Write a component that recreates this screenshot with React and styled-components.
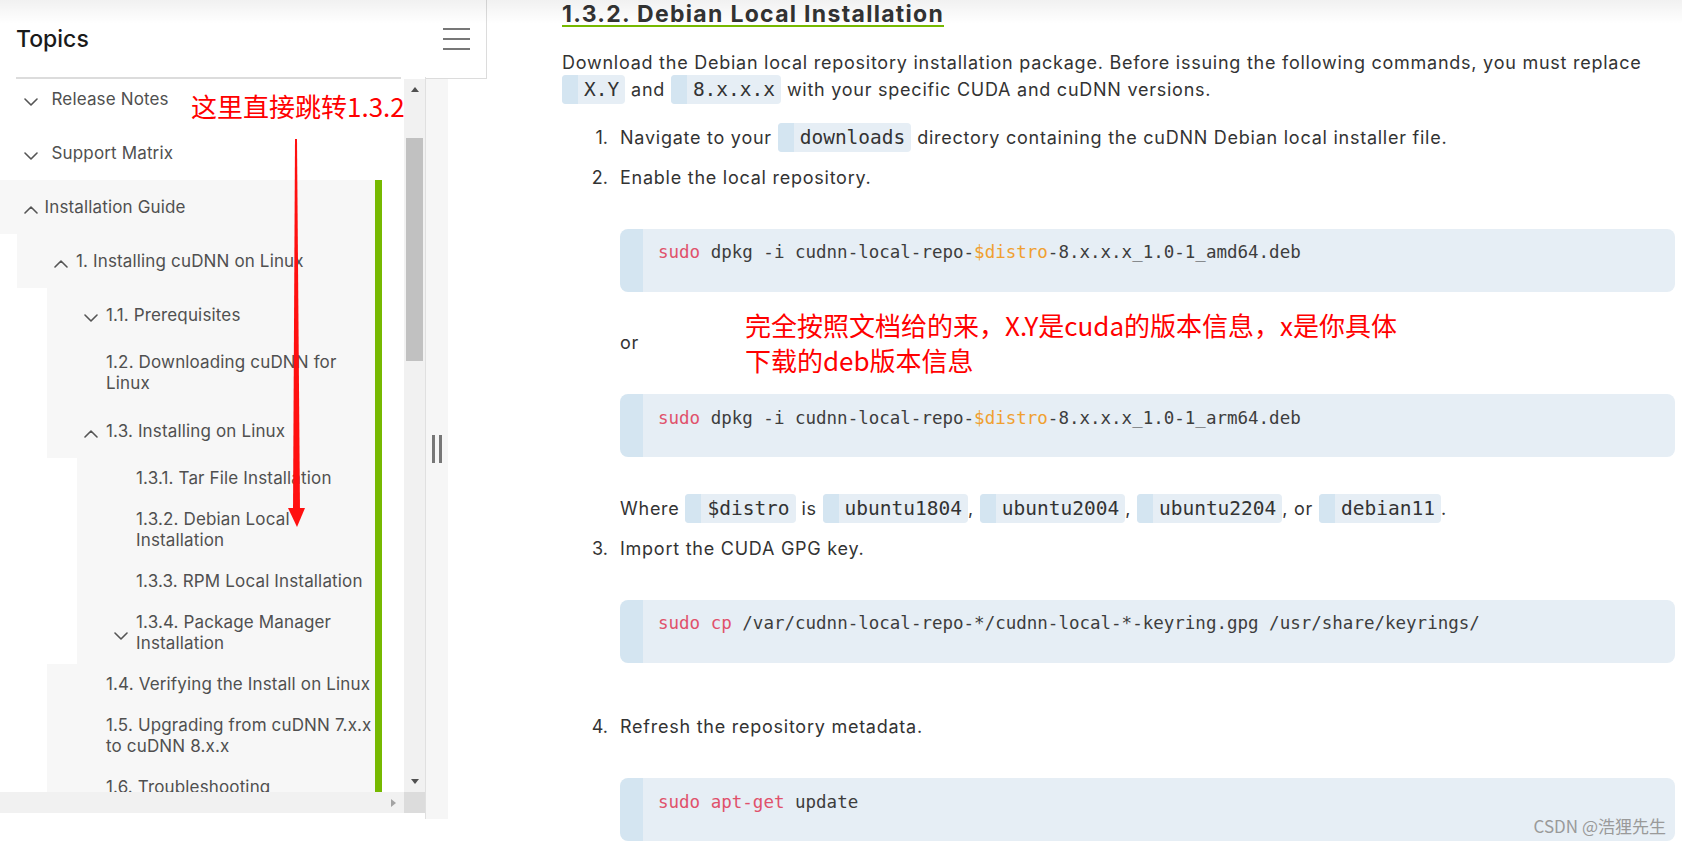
import React from 'react';
import styled, { createGlobalStyle } from 'styled-components';

const GlobalStyle = createGlobalStyle`
  html, body { margin: 0; padding: 0; background: #fff; }
  body { font-family: Inter, "Noto Sans", sans-serif; overflow: hidden; }
  * { box-sizing: border-box; }
`;

const Page = styled.div`
  position: relative;
  display: flex;
  align-items: flex-start;
  width: 1682px;
  height: 844px;
  overflow: hidden;
  background: #fff;
`;

const TopShade = styled.div`
  position: absolute;
  left: 0;
  right: 0;
  top: 0;
  height: 24px;
  background: linear-gradient(to bottom, rgba(0, 0, 0, 0.055), rgba(0, 0, 0, 0));
  pointer-events: none;
  z-index: 5;
`;

/* ---------- Sidebar ---------- */
const Sidebar = styled.aside`
  width: 487px;
  flex-shrink: 0;
  display: flex;
  flex-direction: column;
`;

const SidebarHeader = styled.div`
  height: 79px;
  border-right: 1px solid #dcdcdc;
  border-bottom: 1px solid #dcdcdc;
  display: flex;
  align-items: center;
  justify-content: space-between;
  padding: 0 16px 0 16px;
`;

const SidebarTitle = styled.h3`
  margin: 0;
  font-family: Inter, sans-serif;
  font-size: 23px;
  font-weight: 500;
  color: #1a1a1a;
  line-height: 28px;
`;

const MenuButton = styled.button`
  display: flex;
  flex-direction: column;
  gap: 8px;
  padding: 0;
  border: 0;
  background: none;
  width: 27px;
`;

const MenuBar = styled.span`
  display: block;
  width: 27px;
  height: 2px;
  background: #777;
`;

const SidebarBody = styled.div`
  display: flex;
  margin-top: -2px;
`;

const Pane = styled.div`
  width: 426px;
  display: flex;
  flex-direction: column;
  background: #fff;
  border-right: 1px solid #e0e0e0;
`;

const TopRule = styled.div`
  height: 2px;
  width: 385px;
  margin-left: 16px;
  background: #dcdcdc;
`;

const PaneRow = styled.div`
  display: flex;
  height: 713px;
`;

const Viewport = styled.nav`
  width: 404px;
  height: 713px;
  overflow: hidden;
`;

const VScroll = styled.div`
  width: 21px;
  background: #f1f1f1;
  display: flex;
  flex-direction: column;
  align-items: center;
`;

const ScrollBtn = styled.div`
  width: 21px;
  height: 21px;
  display: flex;
  align-items: center;
  justify-content: center;
`;

const TriUp = styled.span`
  width: 0;
  height: 0;
  border-left: 4.5px solid transparent;
  border-right: 4.5px solid transparent;
  border-bottom: 5px solid #505050;
`;

const TriDown = styled.span`
  width: 0;
  height: 0;
  border-left: 4.5px solid transparent;
  border-right: 4.5px solid transparent;
  border-top: 5px solid #505050;
`;

const TriRight = styled.span`
  width: 0;
  height: 0;
  border-top: 4.5px solid transparent;
  border-bottom: 4.5px solid transparent;
  border-left: 5px solid #a3a3a3;
`;

const Thumb = styled.div`
  width: 17px;
  height: 223px;
  margin-top: 38px;
  background: #c1c1c1;
`;

const Spacer = styled.div`
  flex: 1;
`;

const HScrollRow = styled.div`
  display: flex;
  height: 21px;
`;

const HScroll = styled.div`
  width: 404px;
  background: #f1f1f1;
  display: flex;
  align-items: center;
  justify-content: flex-end;
  padding-right: 8px;
`;

const Corner = styled.div`
  width: 21px;
  background: #dcdcdc;
`;

const Resizer = styled.div`
  width: 22px;
  height: 740px;
  margin-top: 2px;
  background: #f6f6f6;
  display: flex;
  align-items: center;
  justify-content: center;
  gap: 4px;
`;

const Grip = styled.span`
  width: 3px;
  height: 28px;
  background: #777;
`;

const NavList = styled.ul`
  list-style: none;
  margin: ${(p) => p.$top || 0}px 0 0 ${(p) => p.$indent || 0}px;
  padding: 0;
`;

const NavItem = styled.li`
  margin-right: ${(p) => (p.$active ? 22 : 0)}px;
  border-right: ${(p) => (p.$active ? '7px solid #76b900' : 'none')};
`;

const Row = styled.div`
  display: flex;
  align-items: center;
  min-height: ${(p) => (p.$toggle ? 54 : 0)}px;
  padding: 10px 6px 10px ${(p) => p.$pl}px;
  background: ${(p) => (p.$shade ? '#f7f7f7' : 'transparent')};
`;

const ToggleSlot = styled.span`
  width: ${(p) => p.$w}px;
  flex-shrink: 0;
  display: flex;
  align-items: center;
  padding-top: 5px;
`;

const Label = styled.span`
  font-family: Inter, sans-serif;
  font-size: 17px;
  line-height: 21px;
  letter-spacing: 0.15px;
  color: #505050;
  white-space: nowrap;
`;

const Chevron = ({ up }) => (
  <svg width="14" height="8" viewBox="0 0 14 8" fill="none">
    <polyline
      points={up ? '1,7 7,1 13,7' : '1,1 7,7 13,1'}
      stroke="#555"
      strokeWidth="1.6"
      strokeLinecap="round"
      strokeLinejoin="round"
    />
  </svg>
);

const NavRow = ({ pl = 37, slot = 22, toggle, up, shade, children }) => (
  <Row $pl={pl} $toggle={toggle} $shade={shade}>
    <ToggleSlot $w={slot}>{toggle && <Chevron up={up} />}</ToggleSlot>
    <Label>{children}</Label>
  </Row>
);

/* ---------- Main ---------- */
const Main = styled.main`
  margin-left: 75px;
  width: 1113px;
  flex-shrink: 0;
  font-family: Inter, sans-serif;
  font-size: 18px;
  line-height: 27px;
  letter-spacing: 0.75px;
  color: #333;
`;

const Title = styled.h2`
  margin: 0;
  width: fit-content;
  padding-top: 4px;
  font-size: 23px;
  font-weight: 700;
  line-height: 21px;
  letter-spacing: 1.3px;
  color: #333;
  border-bottom: 2px solid #76b900;
`;

const Para = styled.p`
  margin: 22px 0 0;
`;

const Code = styled.code`
  font-family: "DejaVu Sans Mono", monospace;
  font-size: 19.5px;
  line-height: 1;
  letter-spacing: 0;
  color: #333;
  background: #e6eef5;
  border-left: 16px solid #d4e5f1;
  border-radius: 4px;
  padding: 3px 6px;
`;

const Steps = styled.ol`
  list-style: none;
  margin: 20.5px 0 0;
  padding: 0;
`;

const Step = styled.li`
  display: grid;
  grid-template-columns: 58px 1fr;
  margin-bottom: 13px;
`;

const StepNum = styled.span`
  text-align: right;
  padding-right: 12px;
  letter-spacing: 0;
`;

const StepBody = styled.div`
  min-width: 0;
`;

const Line = styled.div``;

const Pre = styled.pre`
  margin: 38px 0 37.5px;
  padding: 11.5px 16px 27.5px 15px;
  border-left: 23px solid #d4e5f1;
  border-radius: 8px;
  background: #e6eef5;
  font-family: "DejaVu Sans Mono", monospace;
  font-size: 17.5px;
  line-height: 24px;
  letter-spacing: 0;
  color: #3d3d3d;
  white-space: pre;
  overflow: hidden;
`;

const Cmd = styled.span`
  color: #e0516b;
`;

const Var = styled.span`
  color: #f0a030;
`;

/* ---------- Overlays ---------- */
const Note = styled.div`
  position: absolute;
  left: ${(p) => p.$x}px;
  top: ${(p) => p.$y}px;
  font-family: "Noto Sans CJK SC", sans-serif;
  font-size: 26px;
  line-height: ${(p) => p.$lh}px;
  color: #ff0000;
  white-space: nowrap;
  z-index: 6;
`;

const ArrowSvg = styled.svg`
  position: absolute;
  left: 0;
  top: 0;
  z-index: 6;
  pointer-events: none;
`;

const Watermark = styled.div`
  position: absolute;
  right: 16px;
  bottom: 8px;
  font-family: "Noto Sans CJK SC", sans-serif;
  font-size: 17px;
  line-height: 20px;
  color: #9a9a9a;
  z-index: 6;
`;

export default function App() {
  return (
    <>
      <GlobalStyle />
      <Page>
        <TopShade />
        <Sidebar>
          <SidebarHeader>
            <SidebarTitle>Topics</SidebarTitle>
            <MenuButton aria-label="menu">
              <MenuBar />
              <MenuBar />
              <MenuBar />
            </MenuButton>
          </SidebarHeader>
          <SidebarBody>
            <Pane>
              <TopRule />
              <PaneRow>
                <Viewport>
                  <NavList $top={-7}>
                    <NavItem>
                      <NavRow pl={24} slot={27.5} toggle>Release Notes</NavRow>
                    </NavItem>
                    <NavItem>
                      <NavRow pl={24} slot={27.5} toggle>Support Matrix</NavRow>
                    </NavItem>
                    <NavItem $active>
                      <NavRow pl={24} slot={20.5} toggle up shade>Installation Guide</NavRow>
                      <NavList $indent={17}>
                        <NavItem>
                          <NavRow toggle up shade>1. Installing cuDNN on Linux</NavRow>
                          <NavList $indent={30}>
                            <NavItem>
                              <NavRow toggle shade>1.1. Prerequisites</NavRow>
                            </NavItem>
                            <NavItem>
                              <NavRow shade>1.2. Downloading cuDNN for<br />Linux</NavRow>
                            </NavItem>
                            <NavItem>
                              <NavRow toggle up shade>1.3. Installing on Linux</NavRow>
                              <NavList $indent={30}>
                                <NavItem>
                                  <NavRow shade>1.3.1. Tar File Installation</NavRow>
                                </NavItem>
                                <NavItem>
                                  <NavRow shade>1.3.2. Debian Local<br />Installation</NavRow>
                                </NavItem>
                                <NavItem>
                                  <NavRow shade>1.3.3. RPM Local Installation</NavRow>
                                </NavItem>
                                <NavItem>
                                  <NavRow toggle shade>1.3.4. Package Manager<br />Installation</NavRow>
                                </NavItem>
                              </NavList>
                            </NavItem>
                            <NavItem>
                              <NavRow shade>1.4. Verifying the Install on Linux</NavRow>
                            </NavItem>
                            <NavItem>
                              <NavRow shade>1.5. Upgrading from cuDNN 7.x.x<br />to cuDNN 8.x.x</NavRow>
                            </NavItem>
                            <NavItem>
                              <NavRow shade>1.6. Troubleshooting</NavRow>
                            </NavItem>
                          </NavList>
                        </NavItem>
                      </NavList>
                    </NavItem>
                  </NavList>
                </Viewport>
                <VScroll>
                  <ScrollBtn><TriUp /></ScrollBtn>
                  <Thumb />
                  <Spacer />
                  <ScrollBtn><TriDown /></ScrollBtn>
                </VScroll>
              </PaneRow>
              <HScrollRow>
                <HScroll><TriRight /></HScroll>
                <Corner />
              </HScrollRow>
            </Pane>
            <Resizer>
              <Grip />
              <Grip />
            </Resizer>
          </SidebarBody>
        </Sidebar>

        <Main>
          <Title>1.3.2. Debian Local Installation</Title>
          <Para>
            Download the Debian local repository installation package. Before issuing the following commands, you must replace
            <br />
            <Code>X.Y</Code> and <Code>8.x.x.x</Code> with your specific CUDA and cuDNN versions.
          </Para>
          <Steps>
            <Step>
              <StepNum>1.</StepNum>
              <StepBody>
                <Line>
                  Navigate to your <Code>downloads</Code> directory containing the cuDNN Debian local installer file.
                </Line>
              </StepBody>
            </Step>
            <Step>
              <StepNum>2.</StepNum>
              <StepBody>
                <Line>Enable the local repository.</Line>
                <Pre>
                  <Cmd>sudo</Cmd> dpkg -i cudnn-local-repo-<Var>$distro</Var>-8.x.x.x_1.0-1_amd64.deb
                </Pre>
                <Line>or</Line>
                <Pre>
                  <Cmd>sudo</Cmd> dpkg -i cudnn-local-repo-<Var>$distro</Var>-8.x.x.x_1.0-1_arm64.deb
                </Pre>
                <Line>
                  Where <Code>$distro</Code> is <Code>ubuntu1804</Code>, <Code>ubuntu2004</Code>,{' '}
                  <Code>ubuntu2204</Code>, or <Code>debian11</Code>.
                </Line>
              </StepBody>
            </Step>
            <Step>
              <StepNum>3.</StepNum>
              <StepBody>
                <Line>Import the CUDA GPG key.</Line>
                <Pre>
                  <Cmd>sudo</Cmd> <Cmd>cp</Cmd> /var/cudnn-local-repo-*/cudnn-local-*-keyring.gpg /usr/share/keyrings/
                </Pre>
              </StepBody>
            </Step>
            <Step>
              <StepNum>4.</StepNum>
              <StepBody>
                <Line>Refresh the repository metadata.</Line>
                <Pre>
                  <Cmd>sudo</Cmd> <Cmd>apt-get</Cmd> update
                </Pre>
              </StepBody>
            </Step>
          </Steps>
        </Main>

        <Note $x={191} $y={93} $lh={26}>这里直接跳转1.3.2</Note>
        <ArrowSvg width="330" height="540" viewBox="0 0 330 540">
          <polygon points="295,139 297,139 300,511 293,511" fill="#ff1010" />
          <polygon points="288,508 305,508 297,527" fill="#ff1010" />
        </ArrowSvg>
        <Note $x={745} $y={307} $lh={35}>
          完全按照文档给的来，X.Y是cuda的版本信息，x是你具体
          <br />
          下载的deb版本信息
        </Note>
        <Watermark>CSDN @浩狸先生</Watermark>
      </Page>
    </>
  );
}
